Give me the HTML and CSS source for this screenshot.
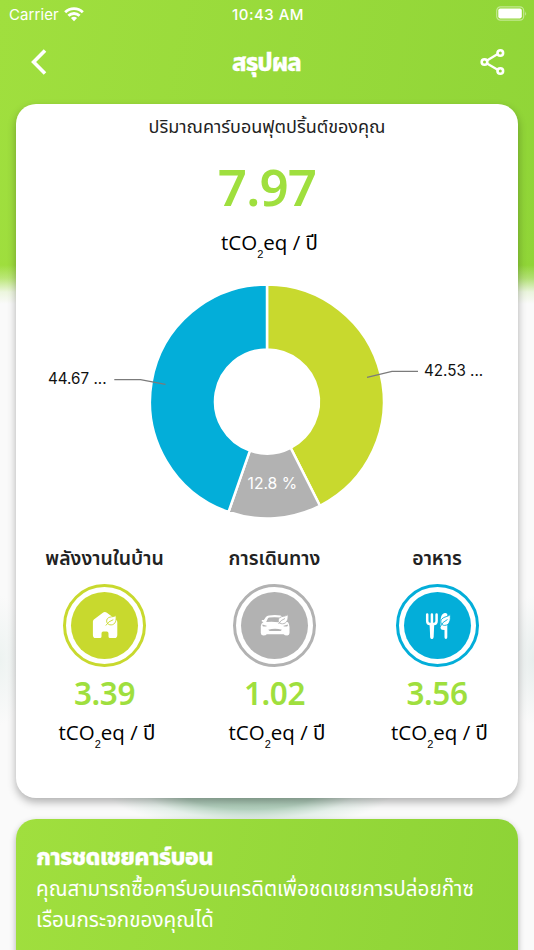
FILE: index.html
```html
<!DOCTYPE html>
<html lang="th">
<head>
  <meta charset="UTF-8">
  <meta name="viewport" content="width=device-width, initial-scale=1.0">
  <title>สรุปผล</title>
  <link rel="stylesheet" href="styles.css">
</head>
<body>
  <div class="screen">
    <header>
      <div class="status-bar">
        <div class="carrier">
          <span>Carrier</span>
          <svg width="20" height="15" viewBox="0 0 20 15" fill="none" stroke="#fff" stroke-width="2.9">
            <path d="M1.2 5.3C6.2.4 13.8.4 18.8 5.3"/>
            <path d="M4.4 8.8C7.6 5.8 12.4 5.8 15.6 8.8"/>
            <path d="M10 14.2L6.9 11.1Q10 8.6 13.1 11.1Z" fill="#fff" stroke="none"/>
          </svg>
        </div>
        <span class="time">10:43 AM</span>
        <svg class="battery" width="32" height="16" viewBox="0 0 32 16">
          <rect x="1.7" y="0.9" width="27" height="13.2" rx="3.8" fill="none" stroke="#fff" stroke-opacity="0.45" stroke-width="1.2"/>
          <rect x="3.3" y="2.6" width="23.5" height="9.8" rx="1.8" fill="#fff"/>
          <path d="M30.2 5.2Q32 7.5 30.2 9.8Z" fill="#fff" fill-opacity="0.5"/>
        </svg>
      </div>
      <nav class="nav-bar">
        <svg width="18" height="28" viewBox="0 0 18 28" fill="none" stroke="#fff" stroke-width="3.6">
          <path d="M14 2.5L2.6 14L14 25.5"/>
        </svg>
        <h1 class="nav-title">สรุปผล</h1>
        <svg width="26" height="28" viewBox="0 0 26 28" fill="none" stroke="#fff" stroke-width="2.3">
          <path d="M7 12.4L17.7 6M7 15.6L17.7 21.8"/>
          <circle cx="4.5" cy="14" r="2.8" stroke-width="2.6"/>
          <circle cx="20.3" cy="5" r="2.8" stroke-width="2.6"/>
          <circle cx="20.3" cy="23" r="2.8" stroke-width="2.6"/>
        </svg>
      </nav>
    </header>

    <section class="result-card">
      <h2 class="result-title">ปริมาณคาร์บอนฟุตปริ้นต์ของคุณ</h2>
      <div class="result-value">7.97</div>
      <div class="unit">tCO<span class="sub">2</span>eq / ปี</div>

      <!-- Donut chart -->
      <svg class="chart" width="502" height="260" viewBox="16 272 502 260">
        <g stroke="#fff" stroke-width="2.5">
          <path d="M267 284.500A117 117 0 0 1 319.900 505.800L290.600 447.800A52 52 0 0 0 267 349.500Z" fill="#c8d92e"/>
          <path d="M319.900 505.800A117 117 0 0 1 228.500 512L249.900 450.600A52 52 0 0 0 290.600 447.800Z" fill="#b2b2b2"/>
          <path d="M228.500 512A117 117 0 0 1 267 284.500L267 349.500A52 52 0 0 0 249.900 450.600Z" fill="#03aed9"/>
        </g>
        <g fill="none" stroke="#7b7b7b" stroke-width="1.3">
          <path d="M114.300 379.700H140.500L165.500 384.300"/>
          <path d="M367 377.400L392 371.400H418"/>
        </g>
        <text class="chart-label" x="48" y="383.500">44.67 ...</text>
        <text class="chart-label" x="424" y="375.500">42.53 ...</text>
        <text class="chart-label light" x="247.500" y="489.200">12.8 %</text>
      </svg>

      <div class="categories">
        <div class="category">
          <h3>พลังงานในบ้าน</h3>
          <div class="ring home">
            <div class="disc">
              <svg width="34" height="34" viewBox="0 0 34 34">
                <path d="M4.900 12.500Q4.900 11.300 5.900 10.500L14.500 3.900Q16.800 2.200 19.200 3.900L28 10.500Q29.300 11.500 29.300 13V26Q29.300 29.100 26.500 29.100H22Q20.500 29.100 20.500 27.500V24.500Q20.500 22.600 18.800 22.600H15.200Q13.500 22.600 13.500 24.500V27.500Q13.500 29.100 12 29.100H7.500Q4.900 29.100 4.900 26Z" fill="#fff"/>
                <path d="M27.900 6.500C28.700 11.200 27.500 15.700 23.200 15.900C19.300 16 17.700 12.700 19.200 9.900C20.800 7 25.500 8.500 27.900 6.500Z" fill="#fff" stroke="#c8d92e" stroke-width="0.900"/>
                <path d="M17.800 16.500Q20.300 12.200 25.300 10.700" fill="none" stroke="#c8d92e" stroke-width="0.900"/>
              </svg>
            </div>
          </div>
          <div class="category-value">3.39</div>
          <div class="unit">tCO<span class="sub">2</span>eq / ปี</div>
        </div>

        <div class="category">
          <h3>การเดินทาง</h3>
          <div class="ring travel">
            <div class="disc">
              <svg width="34" height="34" viewBox="0 0 34 34">
                <path d="M3.800 11L5.900 10.900L7.700 8.300Q8.900 6.700 11 6.500Q17 5.700 22.500 6.500L25.400 8.500L28 12.500L30 13.200Q31.500 15 31.500 18V24Q31.500 26.400 29.300 26.400Q26.500 26.400 25.600 25.200H8.800Q7.900 26.400 5.200 26.400Q2.800 26.400 2.800 24V17Q2.800 14.700 5.500 13L3.800 12.500Z" fill="#fff"/>
                <path d="M8.200 13.100L9.800 9.600Q10.300 8.600 11.500 8.500Q16.500 7.900 21.500 8.500L20.600 13.300Q14 12.200 8.200 13.100Z" fill="#b2b2b2"/>
                <path d="M4.500 15.600L9.200 17Q6.200 18 4.500 17ZM29.800 15.600L25 17Q28 18 29.800 17ZM10.200 20.800Q17 18.800 24 20.800L22.500 22H11.700Z" fill="#b2b2b2"/>
                <path d="M29.800 5.600C31 10.500 28.500 14.600 24.600 14.800C20.200 14.900 19.300 10.700 21.600 8.700C23.800 6.900 27.300 7.700 29.800 5.600Z" fill="#fff" stroke="#b2b2b2" stroke-width="0.900"/>
                <path d="M20.500 15Q22.500 11 27 9.500" fill="none" stroke="#b2b2b2" stroke-width="0.900"/>
              </svg>
            </div>
          </div>
          <div class="category-value">1.02</div>
          <div class="unit">tCO<span class="sub">2</span>eq / ปี</div>
        </div>

        <div class="category">
          <h3>อาหาร</h3>
          <div class="ring food">
            <div class="disc">
              <svg width="34" height="34" viewBox="0 0 34 34">
                <path d="M7.200 5.500V12Q7.200 15 10 15H13.800Q16.600 15 16.600 12V5.500M11.900 5.500V28.500" fill="none" stroke="#fff" stroke-width="2.500" stroke-linecap="round"/>
                <path d="M9.500 14H14.300L13.600 28Q13.600 30 11.900 30Q10.200 30 10.200 28Z" fill="#fff"/>
                <path d="M23.900 4.300Q20.700 5.500 20.500 12V18.500Q20.500 20.500 22 20.800L24.500 21V28.200Q24.500 30 25.900 30Q27.300 30 27.300 28.200V5Q26 3.700 23.900 4.300Z" fill="#fff"/>
                <path d="M30.100 5.600C31 11 29.600 16.200 24.700 16.400C20.700 16.400 19.800 12 22 9.800C24.200 7.500 28 7.900 30.100 5.600Z" fill="#fff" stroke="#03aed9" stroke-width="0.900"/>
                <path d="M20 18Q22.500 12.700 27.500 10.500" fill="none" stroke="#03aed9" stroke-width="0.900"/>
              </svg>
            </div>
          </div>
          <div class="category-value">3.56</div>
          <div class="unit">tCO<span class="sub">2</span>eq / ปี</div>
        </div>
      </div>
    </section>

    <section class="offset-card">
      <h2>การชดเชยคาร์บอน</h2>
      <p>คุณสามารถซื้อคาร์บอนเครดิตเพื่อชดเชยการปล่อยก๊าซ<br>เรือนกระจกของคุณได้</p>
    </section>
  </div>
</body>
</html>
```
FILE: styles.css
```css
* {
  box-sizing: border-box;
}

body {
  margin: 0;
  font-family: "Noto Sans", "Noto Sans Thai", sans-serif;
  background-color: #fafafa;
  color: #222;
}

h1, h2, h3, p {
  margin: 0;
}

svg {
  display: block;
}

/* green top fading out, with the soft blurred shapes behind the cards */
.screen {
  height: 950px;
  overflow: hidden;
  background:
    linear-gradient(to bottom, transparent 265px, rgba(250, 250, 250, 0.3) 278px, rgba(250, 250, 250, 0.85) 292px, #fafafa 304px, transparent 304px),
    radial-gradient(ellipse 145px 42px at 250px 788px, #a3c7af, #b3d0be 50%, rgba(220, 235, 227, 0.7) 75%, rgba(250, 250, 250, 0)),
    radial-gradient(ellipse 30px 65px at 534px 660px, #e8eeed, rgba(250, 250, 250, 0)),
    radial-gradient(ellipse 25px 65px at 0 660px, #edf3f1, rgba(250, 250, 250, 0)),
    linear-gradient(to bottom, transparent 304px, #fafafa 304px),
    linear-gradient(100deg, #a0df3e, #8dd336);
}

.status-bar {
  display: grid;
  grid-template-columns: 1fr auto 1fr;
  align-items: center;
  height: 28px;
  padding: 0 7px 0 9px;
  font-family: Inter, sans-serif;
  font-size: 15px;
  color: #fff;
}

.carrier {
  display: flex;
  align-items: center;
  gap: 5px;
  letter-spacing: 0.1px;
}

.time {
  font-weight: 500;
  letter-spacing: 0.5px;
}

.battery {
  justify-self: end;
}

.nav-bar {
  display: flex;
  justify-content: space-between;
  align-items: center;
  height: 68px;
  padding: 0 28px 0 31px;
}

.nav-title {
  padding-left: 4px;
  font-size: 24px;
  line-height: 30px;
  font-weight: 800;
  letter-spacing: -1px;
  color: #fff;
  -webkit-text-stroke: 0.3px #fff;
}

.result-card {
  height: 694px;
  margin: 8px 16px 0;
  border-radius: 20px;
  background-color: #fff;
  box-shadow: 0 4px 8px rgba(0, 0, 0, 0.3);
  text-align: center;
}

.result-title {
  height: 48px;
  font-size: 18px;
  line-height: 44px;
  font-weight: 400;
}

.result-value {
  height: 70px;
  font-size: 51px;
  line-height: 69px;
  font-weight: 600;
  letter-spacing: -0.8px;
  color: #9fdf3e;
}

.unit {
  height: 50px;
  padding-left: 5px;
  font-family: "Open Sans", "Noto Sans Thai", sans-serif;
  font-size: 20.5px;
  line-height: 41px;
  color: #000;
  white-space: nowrap;
}

.sub {
  position: relative;
  top: 8px;
  font-family: "Liberation Sans", sans-serif;
  font-size: 11px;
  line-height: 0;
}

.chart-label {
  font-family: Inter, sans-serif;
  font-size: 15.2px;
  fill: #111;
}

.chart-label.light {
  font-size: 15.7px;
  fill: #fff;
}

.categories {
  display: grid;
  grid-template-columns: 177px 163px 162px;
  margin-top: 4px;
}

.category h3 {
  height: 48px;
  font-size: 19.4px;
  line-height: 44px;
  font-weight: 600;
}

.category .unit {
  line-height: 39px;
}

.ring {
  display: flex;
  justify-content: center;
  align-items: center;
  width: 83px;
  height: 83px;
  margin: 0 auto;
  border: 3px solid;
  border-radius: 50%;
}

.disc {
  display: flex;
  justify-content: center;
  align-items: center;
  width: 67px;
  height: 67px;
  border-radius: 50%;
}

.home {
  border-color: #c8d92e;
}

.home .disc {
  background-color: #c8d92e;
}

.travel {
  border-color: #b2b2b2;
}

.travel .disc {
  background-color: #b2b2b2;
}

.food {
  border-color: #03aed9;
}

.food .disc {
  background-color: #03aed9;
}

.category-value {
  height: 46px;
  font-size: 31.5px;
  line-height: 51px;
  font-weight: 600;
  letter-spacing: -0.4px;
  color: #9fdf3e;
}

.offset-card {
  height: 180px;
  margin: 21px 16px 0;
  padding: 18px 21px 18px 20px;
  border-radius: 20px;
  background: linear-gradient(100deg, #a0df3e, #8dd336);
  box-shadow: 0 3px 6px rgba(0, 0, 0, 0.3);
  color: #fff;
}

.offset-card h2 {
  height: 36px;
  font-size: 23.5px;
  line-height: 38px;
  font-weight: 800;
  letter-spacing: -0.7px;
  -webkit-text-stroke: 0.3px #fff;
}

.offset-card p {
  font-size: 20.65px;
  line-height: 31px;
  white-space: nowrap;
}
```
